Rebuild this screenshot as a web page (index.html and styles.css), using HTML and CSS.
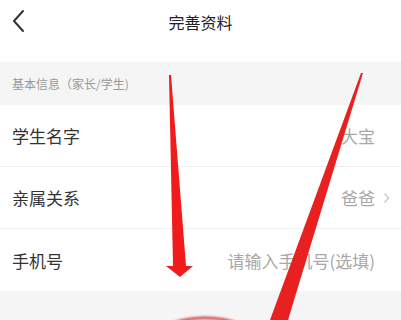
FILE: index.html
```html
<!DOCTYPE html>
<html lang="zh-CN">
<head>
  <meta charset="UTF-8">
  <meta name="viewport" content="width=device-width, initial-scale=1.0">
  <title>完善资料</title>
  <link rel="stylesheet" href="styles.css">
</head>
<body>
  <div class="page">
    <div class="header">
      <svg class="back" width="14" height="24" viewBox="0 0 14 24">
        <path d="M11 2 L2 12 L11 22" fill="none" stroke="#333" stroke-width="2" stroke-linecap="round" stroke-linejoin="round"/>
      </svg>
      <div class="title">完善资料</div>
    </div>

    <div class="section">基本信息（家长/学生)</div>

    <div class="list">
      <div class="row">
        <span class="label">学生名字</span>
        <span class="value">大宝</span>
      </div>
      <div class="row">
        <span class="label">亲属关系</span>
        <span class="value">爸爸
          <svg class="arrow" width="7" height="12" viewBox="0 0 7 12">
            <path d="M1.5 1.5 L5.5 6 L1.5 10.5" fill="none" stroke="#ccc" stroke-width="1.5"/>
          </svg>
        </span>
      </div>
      <div class="row">
        <span class="label">手机号</span>
        <span class="value">请输入手机号(选填)</span>
      </div>
    </div>

    <div class="footer"></div>

    <!-- red annotation marks drawn over the screenshot -->
    <svg class="marks" width="401" height="320" viewBox="0 0 401 320">
      <defs>
        <filter id="soft"><feGaussianBlur stdDeviation="0.8"/></filter>
      </defs>
      <polygon points="169,75 171,75 186,266 193,266 180,277 166,266 173,266" fill="#f01c1c"/>
      <polygon points="361,73 363,73 288,320 270,320" fill="#e82020"/>
      <ellipse cx="205" cy="350" rx="58" ry="32" fill="#fbeaea" stroke="#d44a4a" stroke-width="3" filter="url(#soft)"/>
    </svg>
  </div>
</body>
</html>
```

FILE: styles.css
```css
body {
  margin: 0;
  font-family: "Noto Sans CJK SC", "Noto Sans", sans-serif;
  background: #fff;
}

.page {
  position: relative;
  width: 401px;
  height: 320px;
  overflow: hidden;
}

.header {
  position: relative;
  height: 44px;
  padding-bottom: 18px;
  display: flex;
  align-items: center;
  justify-content: center;
}

.back {
  position: absolute;
  left: 12px;
  top: 9px;
}

.title {
  font-size: 16px;
  color: #222;
}

.section {
  height: 43px;
  background: #f5f5f5;
  color: #999;
  font-size: 12px;
  padding-left: 12px;
  display: flex;
  align-items: center;
}

.row {
  height: 61px;
  padding: 0 26px 0 12px;
  display: flex;
  align-items: center;
  justify-content: space-between;
  border-bottom: 1px solid #efefef;
}

.row:last-child {
  height: 62px;
  border-bottom: none;
}

.label {
  font-size: 17px;
  color: #333;
}

.value {
  position: relative;
  font-size: 17px;
  color: #a8a8a8;
}

.arrow {
  position: absolute;
  right: -15px;
  top: 7px;
}

.footer {
  height: 40px;
  background: #f5f5f5;
}

.marks {
  position: absolute;
  left: 0;
  top: 0;
}
```
